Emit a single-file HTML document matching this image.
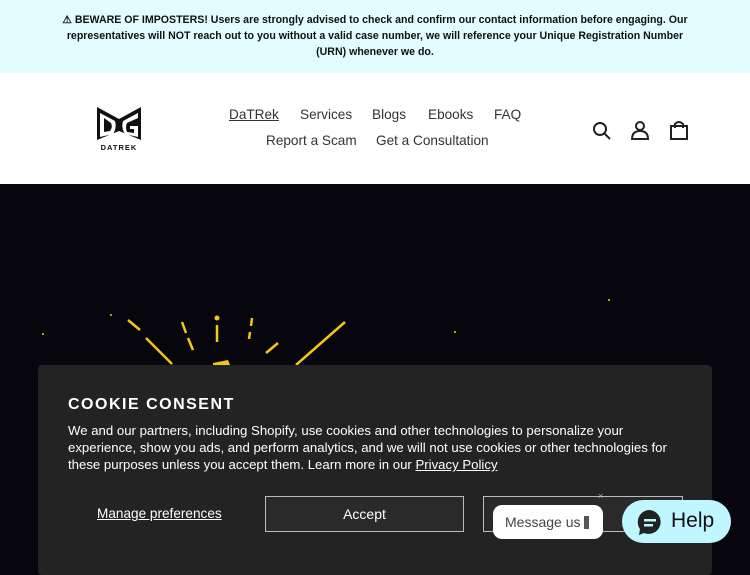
<!DOCTYPE html>
<html><head><meta charset="utf-8"><style>
*{margin:0;padding:0;box-sizing:border-box}
body{width:750px;height:563px;overflow:hidden;font-family:"Liberation Sans",sans-serif;background:#06060c;position:relative}
.ban{position:absolute;left:0;top:0;width:750px;height:73px;background:#e3fcff;text-align:center;font-weight:bold;font-size:10.6px;line-height:16px;color:#111;padding-top:12px}
.hdr{position:absolute;left:0;top:73px;width:750px;height:111px;background:#fff}
.nav{position:absolute;font-size:13.6px;color:#333}
.cc{position:absolute;left:38px;top:365px;width:674px;height:210px;background:#232323;border-radius:4px;color:#fff}
.btn{position:absolute;top:131px;height:36px;border:1px solid #bbb;font-size:14px;text-align:center;line-height:34px;color:#fff;background:#2a2a2a}
</style></head><body>
<div class="ban">⚠ BEWARE OF IMPOSTERS! Users are strongly advised to check and confirm our contact information before engaging. Our<br>representatives will NOT reach out to you without a valid case number, we will reference your Unique Registration Number<br>(URN) whenever we do.</div>
<div class="hdr">
<svg style="position:absolute;left:95px;top:33px" width="48" height="46" viewBox="0 0 48 46"><path d="M2 1 L24 13 L46 1 V34 L24 25 L2 34 Z" fill="#111"/><path d="M5 7 L20 15 Q22 22 18 28 L5 31 Z M9 12 V26 L15 25 Q18 21 16 17 Z" fill="#fff" fill-rule="evenodd"/><path d="M43 7 L28 15 Q26 22 30 28 L43 31 V20 H35 V23 H39 V27 L32 26 Q30 21 32 17 L43 12 Z" fill="#fff"/><text x="24" y="44" font-size="7.5" font-weight="bold" text-anchor="middle" font-family="Liberation Sans" letter-spacing="1" fill="#111">DATREK</text></svg>
<div class="nav" style="left:229px;top:34px;text-decoration:underline">DaTRek</div>
<div class="nav" style="left:300px;top:34px">Services</div>
<div class="nav" style="left:372px;top:34px">Blogs</div>
<div class="nav" style="left:428px;top:34px">Ebooks</div>
<div class="nav" style="left:494px;top:34px">FAQ</div>
<div class="nav" style="left:266px;top:60px">Report a Scam</div>
<div class="nav" style="left:376px;top:60px">Get a Consultation</div>
<svg style="position:absolute;left:592px;top:47px" width="100" height="22" viewBox="0 0 100 22" fill="none" stroke="#222" stroke-width="2"><circle cx="8" cy="9" r="6"/><path d="M12.5 13.5 L18 19"/><circle cx="48" cy="6" r="4"/><path d="M40 19 Q40 11 48 11 Q56 11 56 19 Z"/><path d="M79 6 H95 V19 H79 Z M83 8 V4 Q87 0 91 4 V8"/></svg>
</div>
<svg style="position:absolute;left:0;top:184px" width="750" height="181"><g stroke="#f5c518" stroke-width="2.5"><line x1="128" y1="320" x2="140" y2="330" transform="translate(0,-184)"/><line x1="146" y1="338" x2="172" y2="364" transform="translate(0,-184)"/><line x1="182" y1="322" x2="186" y2="333" transform="translate(0,-184)"/><line x1="188" y1="338" x2="193" y2="350" transform="translate(0,-184)"/><line x1="217" y1="325" x2="217" y2="342" transform="translate(0,-184)"/><line x1="252" y1="318" x2="251" y2="326" transform="translate(0,-184)"/><line x1="250" y1="332" x2="249" y2="339" transform="translate(0,-184)"/><line x1="266" y1="353" x2="278" y2="343" transform="translate(0,-184)"/><line x1="296" y1="365" x2="345" y2="322" transform="translate(0,-184)"/></g><circle cx="217" cy="134" r="2.5" fill="#f5c518"/><polygon points="213,179 228,176 230,181 213,181" fill="#f5c518"/><g fill="#f5c518"><circle cx="43" cy="150" r="1"/><circle cx="111" cy="131" r="1"/><circle cx="455" cy="148" r="1"/><circle cx="609" cy="116" r="1"/></g></svg>
<div class="cc">
<div style="position:absolute;left:30px;top:31px;font-size:16px;font-weight:bold;letter-spacing:1.5px">COOKIE CONSENT</div>
<div style="position:absolute;left:30px;top:57px;width:610px;font-size:13.2px;line-height:17px">We and our partners, including Shopify, use cookies and other technologies to personalize your experience, show you ads, and perform analytics, and we will not use cookies or other technologies for these purposes unless you accept them. Learn more in our <u>Privacy Policy</u></div>
<div style="position:absolute;left:59px;top:141px;font-size:13.6px;text-decoration:underline">Manage preferences</div>
<div class="btn" style="left:227px;width:199px">Accept</div>
<div class="btn" style="left:445px;width:200px"></div>
</div>
<div style="position:absolute;left:493px;top:505px;width:110px;height:34px;background:#fff;border-radius:9px;font-size:14px;color:#444;line-height:34px;padding-left:12px">Message us <span style="display:inline-block;width:5px;height:13px;background:#555;vertical-align:-2px"></span></div>
<div style="position:absolute;left:598px;top:491px;color:#bbb;font-size:9px">×</div>
<div style="position:absolute;left:622px;top:500px;width:109px;height:43px;background:#bff6ff;border-radius:22px"><svg style="position:absolute;left:15px;top:9px" width="27" height="27" viewBox="0 0 27 27"><path d="M13 1 A12 12 0 1 1 7 24 L2 26 L3 20 A12 12 0 0 1 13 1Z" fill="#222"/><rect x="7" y="10" width="12" height="2.5" fill="#bff6ff"/><rect x="7" y="15" width="9" height="2.5" fill="#bff6ff"/></svg><span style="position:absolute;left:49px;top:9px;font-size:21px;color:#111">Help</span></div>
</body></html>
